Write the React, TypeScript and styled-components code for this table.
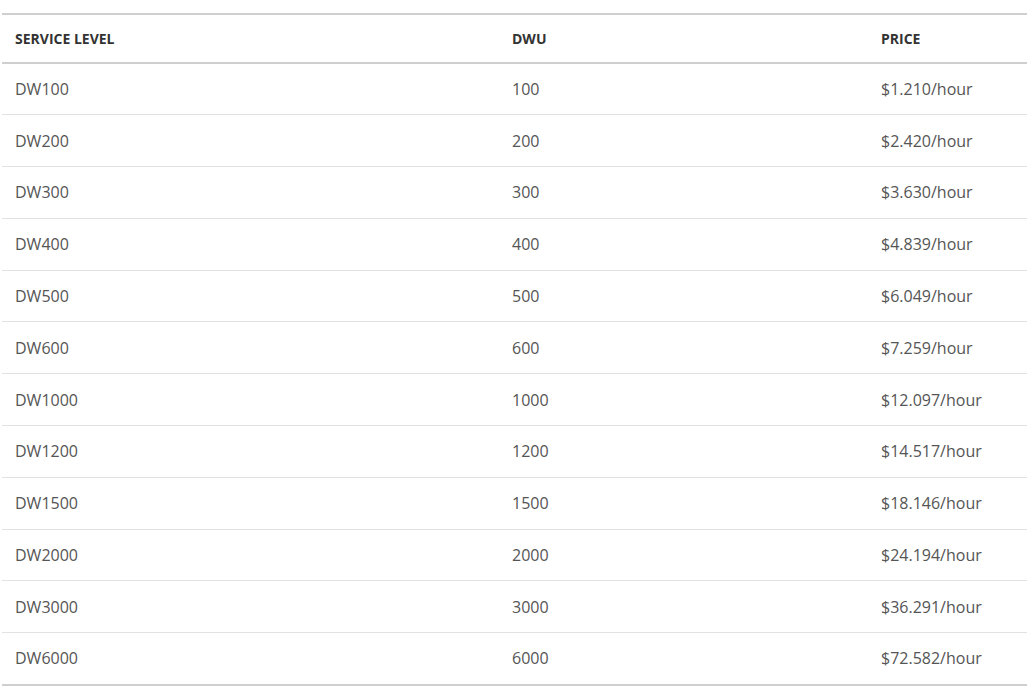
import React from "react";
import styled, { createGlobalStyle } from "styled-components";

const Global = createGlobalStyle`
  html, body { margin: 0; padding: 0; background: #fff; }
  body { font-family: "Open Sans", "Noto Sans", sans-serif; }
`;

const Wrap = styled.div`
  padding: 13px 0 0 2px;
`;

const Table = styled.table`
  width: 1025px;
  border-collapse: collapse;
  table-layout: fixed;
  border-top: 2px solid #cfcfcf;
  border-bottom: 2px solid #cfcfcf;
`;

const Th = styled.th<{ $w: number }>`
  width: ${(p) => p.$w}px;
  height: 49px;
  padding: 0 13px;
  text-align: left;
  font-size: 14px;
  font-weight: 700;
  color: #333;
  border-bottom: 2px solid #cfcfcf;
  box-sizing: border-box;
`;

const Td = styled.td`
  height: 51.8px;
  padding: 0 13px;
  font-size: 16px;
  color: #555;
  border-top: 1px solid #e2e2e2;
  box-sizing: border-box;
`;

const Row = styled.tr`
  &:first-child td { border-top: none; }
`;

const data: [string, string, string][] = [
  ["DW100", "100", "$1.210/hour"],
  ["DW200", "200", "$2.420/hour"],
  ["DW300", "300", "$3.630/hour"],
  ["DW400", "400", "$4.839/hour"],
  ["DW500", "500", "$6.049/hour"],
  ["DW600", "600", "$7.259/hour"],
  ["DW1000", "1000", "$12.097/hour"],
  ["DW1200", "1200", "$14.517/hour"],
  ["DW1500", "1500", "$18.146/hour"],
  ["DW2000", "2000", "$24.194/hour"],
  ["DW3000", "3000", "$36.291/hour"],
  ["DW6000", "6000", "$72.582/hour"],
];

export default function App() {
  return (
    <Wrap>
      <Global />
      <Table>
        <thead>
          <tr>
            <Th $w={497}>SERVICE LEVEL</Th>
            <Th $w={369}>DWU</Th>
            <Th $w={159}>PRICE</Th>
          </tr>
        </thead>
        <tbody>
          {data.map((r) => (
            <Row key={r[0]}>
              <Td>{r[0]}</Td>
              <Td>{r[1]}</Td>
              <Td>{r[2]}</Td>
            </Row>
          ))}
        </tbody>
      </Table>
    </Wrap>
  );
}
